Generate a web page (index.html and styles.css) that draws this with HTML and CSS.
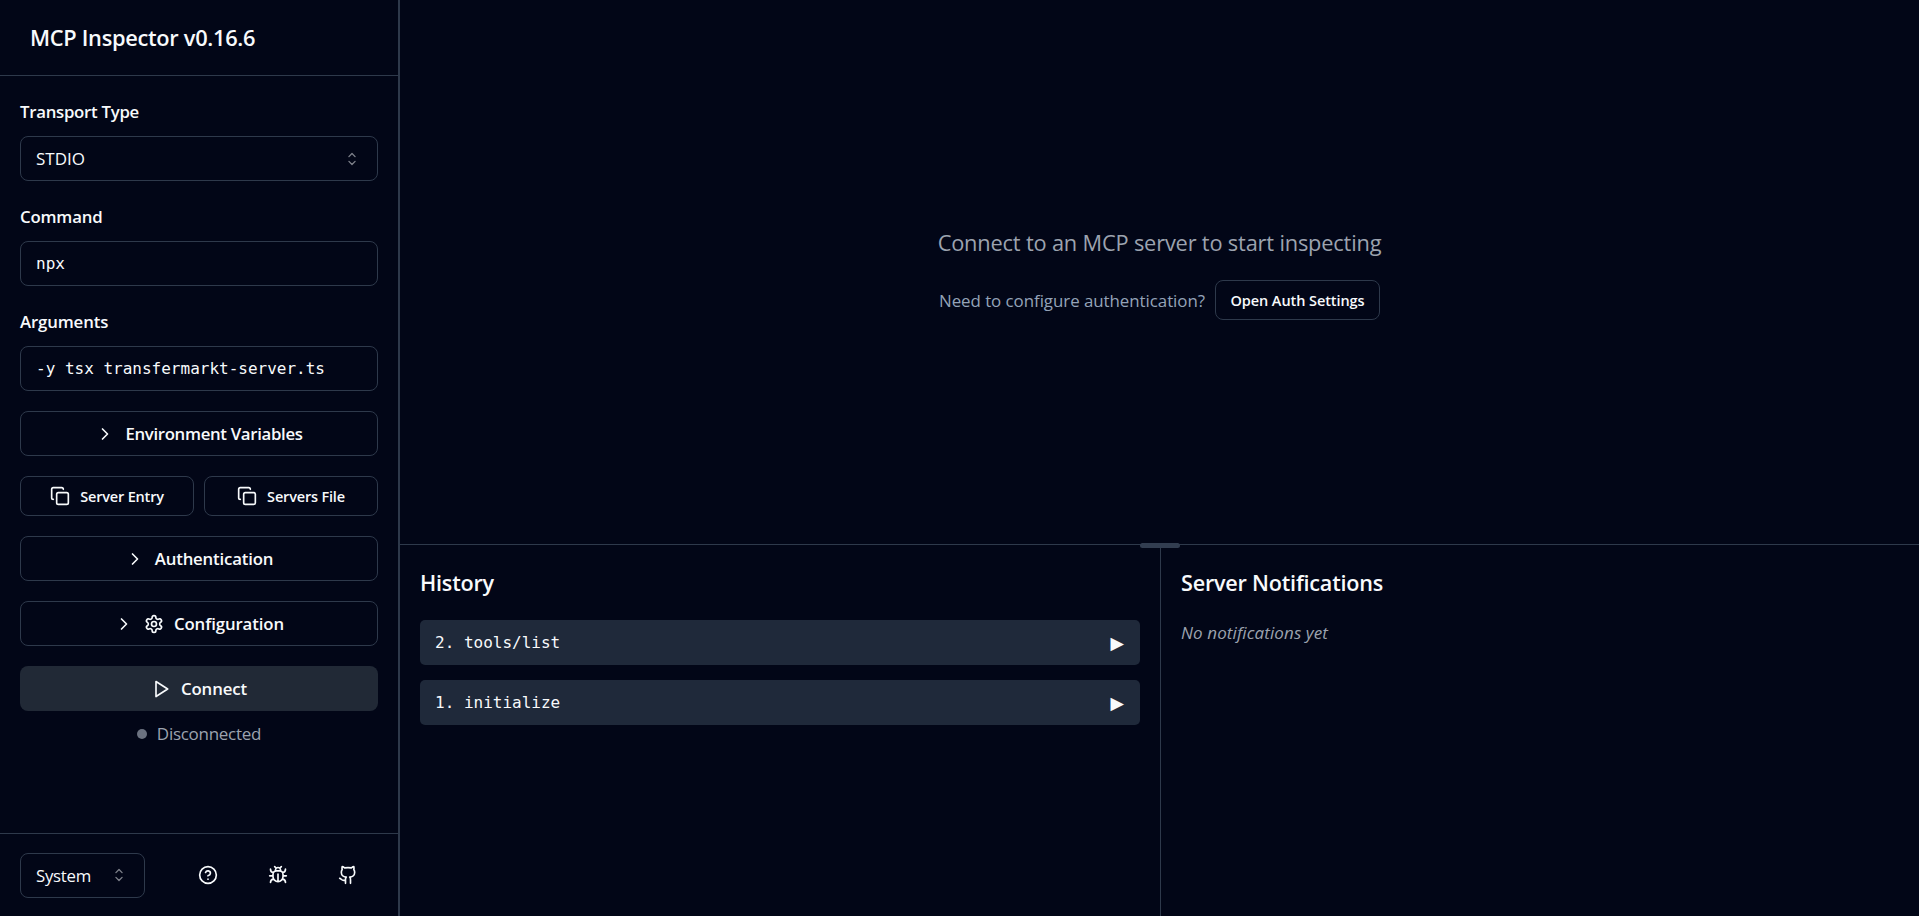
FILE: index.html
```html
<!DOCTYPE html>
<html lang="en">
<head>
<meta charset="utf-8">
<title>MCP Inspector</title>
<link rel="stylesheet" href="styles.css">
</head>
<body>
<svg class="defs" aria-hidden="true">
  <symbol id="chevron" viewBox="0 0 24 24"><path d="m9 18 6-6-6-6"/></symbol>
  <symbol id="copy" viewBox="0 0 24 24"><rect width="14" height="14" x="8" y="8" rx="2"/><path d="M4 16c-1.1 0-2-.9-2-2V4c0-1.1.9-2 2-2h10c1.1 0 2 .9 2 2"/></symbol>
  <symbol id="sort" viewBox="0 0 15 15"><path d="M5.2 5.7 7.5 3.4l2.3 2.3M5.2 9.3l2.3 2.3 2.3-2.3"/></symbol>
</svg>
<div class="app">
  <aside class="sidebar">
    <header class="sidebar-header"><h1 class="title">MCP Inspector v0.16.6</h1></header>
    <div class="form">
      <div class="field">
        <label class="label label-transport">Transport Type</label>
        <div class="box select"><span>STDIO</span><svg class="icon sort"><use href="#sort"/></svg></div>
      </div>
      <div class="field">
        <label class="label label-command">Command</label>
        <div class="box mono">npx</div>
      </div>
      <div class="field">
        <label class="label label-args">Arguments</label>
        <div class="box mono">-y tsx transfermarkt-server.ts</div>
      </div>
      <button class="button env"><svg class="icon"><use href="#chevron"/></svg><span>Environment Variables</span></button>
      <div class="pair">
        <button class="button small"><svg class="icon"><use href="#copy"/></svg><span>Server Entry</span></button>
        <button class="button small"><svg class="icon"><use href="#copy"/></svg><span>Servers File</span></button>
      </div>
      <button class="button auth"><svg class="icon"><use href="#chevron"/></svg><span>Authentication</span></button>
      <button class="button config"><svg class="icon"><use href="#chevron"/></svg>
        <svg class="icon" viewBox="0 0 24 24"><path d="M12.22 2h-.44a2 2 0 0 0-2 2v.18a2 2 0 0 1-1 1.73l-.43.25a2 2 0 0 1-2 0l-.15-.08a2 2 0 0 0-2.73.73l-.22.38a2 2 0 0 0 .73 2.73l.15.1a2 2 0 0 1 1 1.72v.51a2 2 0 0 1-1 1.74l-.15.09a2 2 0 0 0-.73 2.73l.22.38a2 2 0 0 0 2.73.73l.15-.08a2 2 0 0 1 2 0l.43.25a2 2 0 0 1 1 1.73V20a2 2 0 0 0 2 2h.44a2 2 0 0 0 2-2v-.18a2 2 0 0 1 1-1.73l.43-.25a2 2 0 0 1 2 0l.15.08a2 2 0 0 0 2.73-.73l.22-.39a2 2 0 0 0-.73-2.73l-.15-.08a2 2 0 0 1-1-1.74v-.5a2 2 0 0 1 1-1.74l.15-.09a2 2 0 0 0 .73-2.73l-.22-.38a2 2 0 0 0-2.73-.73l-.15.08a2 2 0 0 1-2 0l-.43-.25a2 2 0 0 1-1-1.73V4a2 2 0 0 0-2-2z"/><circle cx="12" cy="12" r="3"/></svg>
        <span>Configuration</span></button>
      <div class="connect-group">
        <button class="button primary"><svg class="icon" viewBox="0 0 24 24"><path d="m6 3 14 9-14 9V3z"/></svg><span>Connect</span></button>
        <div class="status"><i class="dot"></i><span>Disconnected</span></div>
      </div>
    </div>
    <footer class="sidebar-footer">
      <div class="box select theme"><span>System</span><svg class="icon sort"><use href="#sort"/></svg></div>
      <nav class="links">
        <a class="link"><svg class="icon" viewBox="0 0 24 24"><circle cx="12" cy="12" r="10"/><path d="M9.09 9a3 3 0 0 1 5.83 1c0 2-3 3-3 3M12 17h.01"/></svg></a>
        <a class="link"><svg class="icon" viewBox="0 0 24 24"><path d="m8 2 1.88 1.88M14.12 3.88 16 2M9 7.13v-1a3.003 3.003 0 1 1 6 0v1M12 20c-3.3 0-6-2.7-6-6v-3a4 4 0 0 1 4-4h4a4 4 0 0 1 4 4v3c0 3.3-2.7 6-6 6M12 20v-9M6.53 9C4.6 8.8 3 7.1 3 5M6 13H2M3 21c0-2.1 1.7-3.9 3.8-4M20.97 5c0 2.1-1.6 3.8-3.5 4M22 13h-4M17.2 17c2.1.1 3.8 1.9 3.8 4"/></svg></a>
        <a class="link"><svg class="icon" viewBox="0 0 24 24"><path d="M15 22v-4a4.8 4.8 0 0 0-1-3.5c3 0 6-2 6-5.5.08-1.25-.27-2.48-1-3.5.28-1.15.28-2.35 0-3.5 0 0-1 0-3 1.5-2.64-.5-5.36-.5-8 0C6 2 5 2 5 2c-.3 1.15-.3 2.35 0 3.5A5.403 5.403 0 0 0 4 9c0 3.5 3 5.5 6 5.5-.39.49-.68 1.05-.85 1.65-.17.6-.22 1.23-.15 1.85v4M9 18c-4.51 2-5-2-7-2"/></svg></a>
      </nav>
    </footer>
  </aside>
  <main class="main">
    <section class="welcome">
      <p class="welcome-title">Connect to an MCP server to start inspecting</p>
      <div class="welcome-row"><span class="hint">Need to configure authentication?</span><button class="button open-auth">Open Auth Settings</button></div>
    </section>
    <section class="bottom">
      <div class="handle"></div>
      <div class="history">
        <h2 class="heading">History</h2>
        <ul class="list">
          <li class="entry"><span>2. tools/list</span><span class="arrow">▶</span></li>
          <li class="entry"><span>1. initialize</span><span class="arrow">▶</span></li>
        </ul>
      </div>
      <div class="notifications">
        <h2 class="heading">Server Notifications</h2>
        <p class="empty">No notifications yet</p>
      </div>
    </section>
  </main>
</div>
</body>
</html>
```
FILE: styles.css
```css
:root {
  --bg: #020617;
  --fg: #f8fafc;
  --border: #2e394b;
  --panel: #212936;
}
* { box-sizing: border-box; margin: 0; padding: 0; }
body {
  background: var(--bg);
  color: var(--fg);
  font: 400 17px/25px "Open Sans", sans-serif;
}
.defs { position: absolute; width: 0; height: 0; }
.app { display: flex; height: 916px; overflow: hidden; }

.sidebar {
  display: flex;
  flex-direction: column;
  width: 400px;
  flex: none;
  border-right: 2px solid var(--border);
}
.sidebar-header {
  height: 76px;
  padding: 20px 30px;
  border-bottom: 1px solid var(--border);
}
.title { font-size: 21.8px; line-height: 35px; font-weight: 600; letter-spacing: -.3px; }
.form { display: flex; flex-direction: column; gap: 20px; padding: 20px; flex: 1; }
.field { display: flex; flex-direction: column; gap: 10px; }
.label { height: 30px; line-height: 32px; font-size: 16.8px; font-weight: 600; }
.label-transport { letter-spacing: -.27px; }
.label-command { letter-spacing: -.19px; }
.label-args { letter-spacing: -.14px; }
.box {
  display: flex;
  align-items: center;
  height: 45px;
  padding: 0 15px;
  border: 1px solid var(--border);
  border-radius: 8px;
}
.select { justify-content: space-between; }
.mono { font: 16px/24px "DejaVu Sans Mono", monospace; }

.icon {
  width: 20px;
  height: 20px;
  flex: none;
  fill: none;
  stroke: currentColor;
  stroke-width: 2;
  stroke-linecap: round;
  stroke-linejoin: round;
}
.sort { stroke-width: 1; opacity: .5; }

.button {
  display: flex;
  align-items: center;
  justify-content: center;
  gap: 10px;
  height: 45px;
  flex: none;
  border: 1px solid var(--border);
  border-radius: 8px;
  background: var(--bg);
  color: var(--fg);
  font: 600 16.8px/25px "Open Sans", sans-serif;
}
.env { letter-spacing: -.32px; }
.auth { letter-spacing: -.19px; }
.config { letter-spacing: -.1px; }
.pair { display: grid; grid-template-columns: 1fr 1fr; gap: 10px; }
.small { height: 40px; font-size: 14.5px; letter-spacing: -.18px; }
.primary { width: 100%; border: 0; background: var(--panel); letter-spacing: -.1px; }
.status {
  display: flex;
  align-items: center;
  justify-content: center;
  gap: 10px;
  height: 45px;
  color: #9ca3af;
  font-size: 17px;
  letter-spacing: -.28px;
}
.dot { width: 10px; height: 10px; border-radius: 50%; background: #6b7280; }

.sidebar-footer {
  display: flex;
  align-items: center;
  justify-content: space-between;
  height: 83px;
  padding: 3px 25px 3px 20px;
  border-top: 1px solid var(--border);
}
.theme { width: 125px; font-size: 16.8px; letter-spacing: -.25px; }
.links { display: flex; gap: 20px; }
.link { display: flex; align-items: center; justify-content: center; width: 50px; height: 45px; }

.main { display: flex; flex-direction: column; flex: 1; }
.welcome {
  display: flex;
  flex-direction: column;
  align-items: center;
  justify-content: center;
  gap: 20px;
  height: 544px;
  padding-top: 1px;
}
.welcome-title { font-size: 21.8px; line-height: 35px; letter-spacing: -.18px; color: #9ca3af; }
.welcome-row { display: flex; align-items: center; gap: 10px; }
.hint { font-size: 16.9px; letter-spacing: -.05px; color: #94a3b8; }
.open-auth { width: 165px; height: 40px; font-size: 14.5px; letter-spacing: -.08px; }

.bottom { position: relative; display: flex; flex: 1; border-top: 1px solid var(--border); }
.handle {
  position: absolute;
  top: -2px;
  left: 740px;
  width: 40px;
  height: 5px;
  border-radius: 3px;
  background: #323d50;
}
.history { width: 761px; padding: 20px; border-right: 1px solid var(--border); }
.notifications { flex: 1; padding: 20px; }
.heading { font-size: 21.6px; line-height: 35px; font-weight: 600; letter-spacing: -.21px; }
.list { display: flex; flex-direction: column; gap: 15px; margin-top: 20px; list-style: none; }
.entry {
  display: flex;
  align-items: center;
  justify-content: space-between;
  height: 45px;
  padding: 0 16px 0 15px;
  border-radius: 5px;
  background: #1f293a;
  font: 16px/24px "DejaVu Sans Mono", monospace;
}
.arrow { font: 17.5px/24px "DejaVu Sans", sans-serif; }
.empty { margin-top: 20px; font-size: 17px; font-style: italic; letter-spacing: .1px; color: #9ca3af; }
```
